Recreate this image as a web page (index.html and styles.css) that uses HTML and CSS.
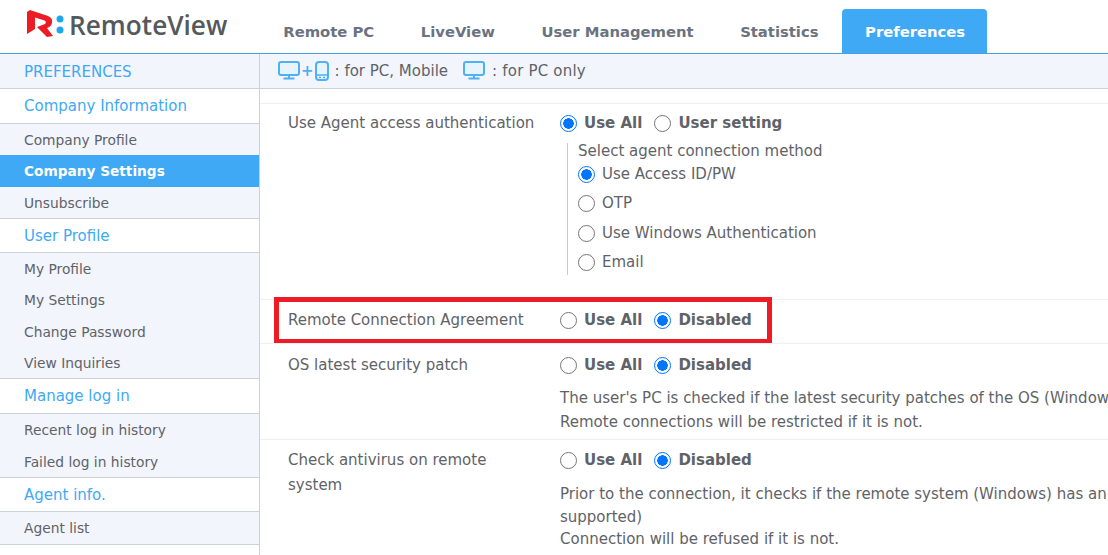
FILE: index.html
```html
<!DOCTYPE html>
<html lang="en">
<head>
    <meta charset="UTF-8">
    <meta name="viewport" content="width=device-width, initial-scale=1.0">
    <title>RemoteView Preferences</title>
    <link rel="stylesheet" href="styles.css">
</head>
<body>
    <header class="topbar">
        <div class="logo">
            <svg class="logo-mark" width="38" height="30" viewBox="0 0 38 30">
                <path d="M1 3 L4 1 L22 7 Q27 9 26 14 Q25 18 21 19 L27 27 L21 28 L11 18 L19 15 Q21 13 18.500 11.500 L9 8.500 L9 20 L1 25 Z" fill="#ed1c24"/>
                <circle cx="34" cy="10" r="3.500" fill="#1ea7e8"/>
                <circle cx="34" cy="21" r="3.500" fill="#1ea7e8"/>
            </svg>
            <span class="logo-text">RemoteView</span>
        </div>
        <nav class="tabs">
            <a class="tab">Remote PC</a>
            <a class="tab">LiveView</a>
            <a class="tab">User Management</a>
            <a class="tab">Statistics</a>
            <a class="tab active">Preferences</a>
        </nav>
    </header>
    <div class="layout">
        <aside class="sidebar">
            <div class="side-title">PREFERENCES</div>
            <div class="side-group">Company Information</div>
            <ul class="side-list">
                <li>Company Profile</li>
                <li class="current">Company Settings</li>
                <li>Unsubscribe</li>
            </ul>
            <div class="side-group short">User Profile</div>
            <ul class="side-list">
                <li>My Profile</li>
                <li>My Settings</li>
                <li>Change Password</li>
                <li>View Inquiries</li>
            </ul>
            <div class="side-group">Manage log in</div>
            <ul class="side-list">
                <li>Recent log in history</li>
                <li>Failed log in history</li>
            </ul>
            <div class="side-group short">Agent info.</div>
            <ul class="side-list">
                <li>Agent list</li>
            </ul>
        </aside>
        <main class="content">
            <div class="legend">
                <svg class="pc-icon" width="22" height="19" viewBox="0 0 22 19">
                    <rect x="1" y="1" width="20" height="13" rx="2" fill="#e6f4fe" stroke="#4fb0f5" stroke-width="2"/>
                    <path d="M11 14 V17 M5.500 17.500 H16.500" stroke="#4fb0f5" stroke-width="2" fill="none"/>
                </svg>
                <span class="plus">+</span>
                <svg class="mobile-icon" width="14" height="20" viewBox="0 0 14 20">
                    <rect x="1" y="1" width="12" height="18" rx="3" fill="#e6f4fe" stroke="#4fb0f5" stroke-width="2"/>
                    <path d="M1 14 H13" stroke="#4fb0f5" stroke-width="1.500" fill="none"/>
                    <path d="M4 16.500 H6 M8 16.500 H10" stroke="#4fb0f5" stroke-width="1.500" fill="none"/>
                </svg>
                <span class="legend-text">: for PC, Mobile</span>
                <svg class="pc-icon second" width="22" height="19" viewBox="0 0 22 19">
                    <rect x="1" y="1" width="20" height="13" rx="2" fill="#e6f4fe" stroke="#4fb0f5" stroke-width="2"/>
                    <path d="M11 14 V17 M5.500 17.500 H16.500" stroke="#4fb0f5" stroke-width="2" fill="none"/>
                </svg>
                <span class="legend-text only">: for PC only</span>
            </div>
            <div class="spacer"></div>
            <section class="row row-auth">
                <div class="row-label">Use Agent access authentication</div>
                <div class="row-body">
                    <div class="options">
                        <label class="radio on">Use All</label>
                        <label class="radio">User setting</label>
                    </div>
                    <div class="methods">
                        <div class="methods-title">Select agent connection method</div>
                        <div class="method on">Use Access ID/PW</div>
                        <div class="method">OTP</div>
                        <div class="method">Use Windows Authentication</div>
                        <div class="method">Email</div>
                    </div>
                </div>
            </section>
            <section class="row row-agreement">
                <div class="row-label">Remote Connection Agreement</div>
                <div class="row-body">
                    <div class="options">
                        <label class="radio">Use All</label>
                        <label class="radio on">Disabled</label>
                    </div>
                </div>
                <div class="highlight"></div>
            </section>
            <section class="row row-patch">
                <div class="row-label">OS latest security patch</div>
                <div class="row-body">
                    <div class="options">
                        <label class="radio">Use All</label>
                        <label class="radio on">Disabled</label>
                    </div>
                    <p class="note">The user's PC is checked if the latest security patches of the OS (Windows) are installed.<br>Remote connections will be restricted if it is not.</p>
                </div>
            </section>
            <section class="row row-antivirus">
                <div class="row-label">Check antivirus on remote system</div>
                <div class="row-body">
                    <div class="options">
                        <label class="radio">Use All</label>
                        <label class="radio on">Disabled</label>
                    </div>
                    <p class="note">Prior to the connection, it checks if the remote system (Windows) has an antivirus installed (Only some are<br>supported)<br>Connection will be refused if it is not.</p>
                </div>
            </section>
        </main>
    </div>
</body>
</html>
```

FILE: styles.css
```css
* {
    box-sizing: border-box;
}
html, body {
    height: 100%;
}
body {
    margin: 0;
    font-family: "DejaVu Sans", sans-serif;
    font-size: 15px;
    color: #5f6368;
    background-color: #fff;
    overflow: hidden;
}
.topbar {
    height: 54px;
    display: flex;
    border-bottom: 1px solid #4c9fe2;
}
.logo {
    width: 260px;
    padding: 9px 0 0 26px;
    display: flex;
    align-items: flex-start;
}
.logo-mark {
    flex: none;
}
.logo-text {
    font-family: "Open Sans", sans-serif;
    font-size: 26.200px;
    font-weight: 600;
    line-height: 32px;
    color: #55595c;
    margin-left: 5px;
}
.tabs {
    display: flex;
    padding-top: 9px;
}
.tab {
    height: 44px;
    padding: 0 23.250px;
    line-height: 45px;
    font-size: 14.800px;
    font-weight: bold;
    color: #6b7280;
}
.tab.active {
    padding-right: 21.500px;
    color: #fff;
    background-color: #3fa9f5;
    border-radius: 4px 4px 0 0;
}
.layout {
    display: flex;
    height: 501px;
}
.sidebar {
    width: 260px;
    flex: none;
    border-right: 1px solid #ccd2db;
}
.side-title {
    height: 35px;
    line-height: 36px;
    padding-left: 24px;
    color: #3fa9f5;
    background-color: #f2f5fc;
    border-bottom: 1px solid #ccd2db;
}
.side-group {
    height: 35px;
    line-height: 35px;
    padding-left: 24px;
    color: #3fa9f5;
    border-bottom: 1px solid #ccd2db;
}
.side-group.short {
    height: 34px;
    line-height: 34px;
}
.side-list {
    margin: 0;
    padding: 0;
    list-style: none;
    background-color: #f2f5fc;
    border-bottom: 1px solid #ccd2db;
}
.side-list:last-child {
    min-height: 33px;
}
.side-list li {
    height: 31.330px;
    line-height: 32px;
    padding-left: 24px;
    font-size: 13.800px;
}
.side-list li.current {
    background-color: #3fa9f5;
    color: #fff;
    font-weight: bold;
    font-size: 13.700px;
}
.content {
    flex: 1;
    min-width: 0;
}
.legend {
    height: 35px;
    padding: 0 0 1px 18px;
    display: flex;
    align-items: center;
    background-color: #f2f5fc;
    border-bottom: 1px solid #ccd2db;
}
.plus {
    color: #4fb0f5;
    font-size: 15px;
    font-weight: bold;
    margin: 0 1px;
}
.legend-text {
    margin-left: 6px;
}
.legend-text.only {
    margin-left: 7px;
    letter-spacing: 0.2px;
}
.pc-icon.second {
    margin-left: 15px;
}
.spacer {
    height: 14px;
}
.row {
    position: relative;
    display: flex;
    border-top: 1px solid #eef0f3;
    padding: 9px 0 0 28px;
    white-space: nowrap;
}
.row-auth {
    height: 196px;
}
.row-agreement {
    height: 44px;
    padding-top: 10px;
}
.row-patch {
    height: 96px;
    padding-top: 11px;
}
.row-antivirus {
    height: 120px;
    padding-top: 10px;
}
.row-label {
    width: 272px;
    flex: none;
    line-height: 21px;
}
.row-antivirus .row-label {
    white-space: normal;
    padding-right: 60px;
    line-height: 25px;
    margin-top: -2px;
}
.options {
    display: flex;
    gap: 12px;
    line-height: 21px;
}
.radio {
    font-weight: bold;
    display: flex;
    align-items: center;
}
.radio::before, .method::before {
    content: "";
    width: 15px;
    height: 15px;
    flex: none;
    margin-right: 7px;
    border-radius: 50%;
    border: 1px solid #767676;
    background-color: #fff;
}
.radio.on::before, .method.on::before {
    border: 1px solid #0075ff;
    background: radial-gradient(circle, #0075ff 0, #0075ff 5px, #fff 5.500px);
}
.methods {
    margin: 9px 0 0 7px;
    padding-left: 10px;
    border-left: 1px solid #ccc;
    height: 132px;
}
.methods-title {
    line-height: 17px;
}
.method {
    display: flex;
    align-items: center;
    line-height: 29.300px;
}
.note {
    margin: 10px 0 0;
    line-height: 24px;
}
.row-antivirus .note {
    margin-top: 12px;
    line-height: 22.500px;
}
.highlight {
    position: absolute;
    left: 14px;
    top: -3px;
    width: 498px;
    height: 47px;
    border: 5px solid #ed1c24;
}
```
